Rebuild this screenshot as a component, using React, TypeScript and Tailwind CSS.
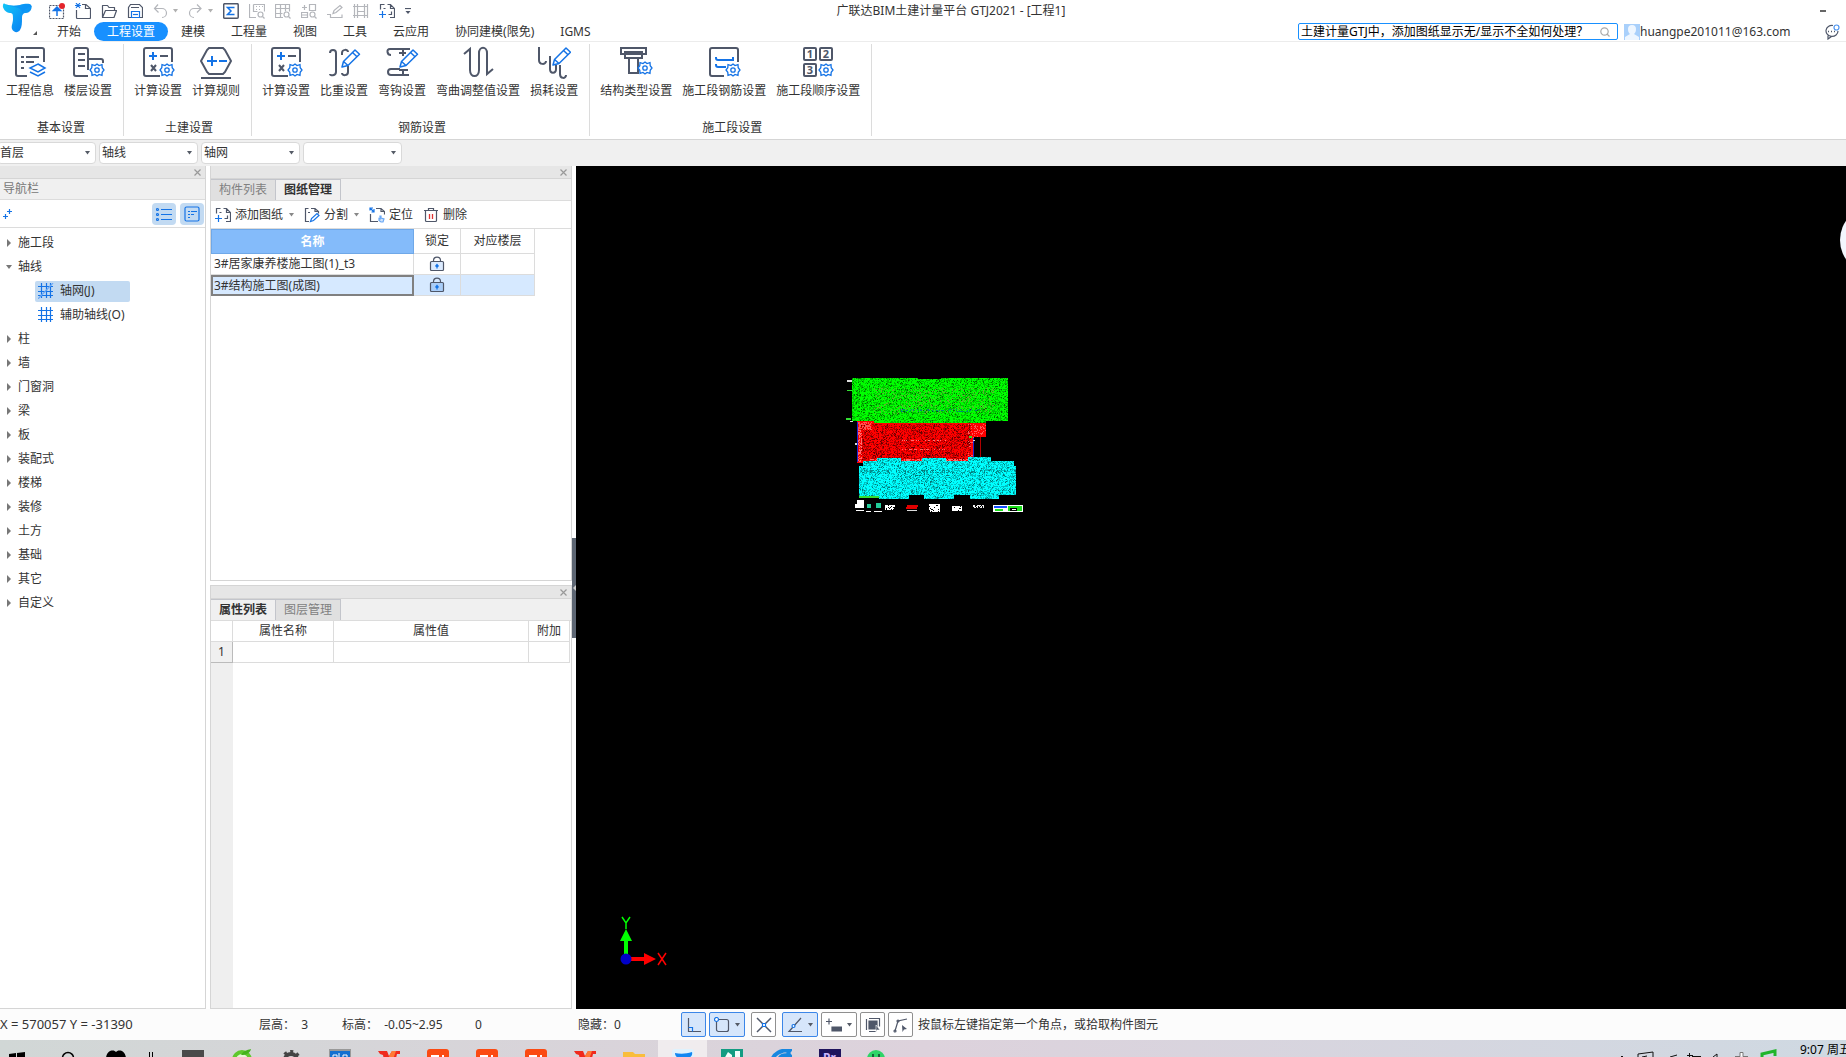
import type { ReactNode } from "react";
import clsx from "clsx";

const DARK = "#4f5769";
const BLUE = "#1473e6";
const PALE = "#b4b6bb";

type IconProps = {
  children: ReactNode;
  box?: number;
  className?: string;
  stroke?: string;
  width?: number;
};

function Icon({
  children,
  box = 16,
  className = "size-4",
  stroke = DARK,
  width = 1.2,
}: IconProps) {
  return (
    <svg
      viewBox={`0 0 ${box} ${box}`}
      className={clsx("block shrink-0", className)}
      fill="none"
      stroke={stroke}
      strokeWidth={width}
      aria-hidden="true"
    >
      {children}
    </svg>
  );
}

function Caret({ className = "text-[#555b66]" }: { className?: string }) {
  return (
    <svg viewBox="0 0 5 4" className={clsx("block h-1 w-[5px] shrink-0", className)} aria-hidden="true">
      <path d="M0 0h5L2.500 3.500z" fill="currentColor" />
    </svg>
  );
}

/* ---------- shared icon parts ---------- */

function Gear({ x, y }: { x: number; y: number }) {
  return (
    <g transform={`translate(${x} ${y})`} stroke={BLUE} strokeWidth="1.3" fill="#fff">
      <path d="M0-6l2 1.600 3-.9.2 3L7 0 5.200 2.300l-.2 3-3-.9L0 6l-2-1.600-3 .9-.2-3L-7 0l1.800-2.300.2-3 3 .9z" />
      <circle r="2.200" />
    </g>
  );
}

function Pencil({ x, y }: { x: number; y: number }) {
  return (
    <g transform={`translate(${x} ${y})`} stroke={BLUE} strokeWidth="1.5" fill="#fff" strokeLinejoin="round">
      <path d="M0 17l1.500-5.500L13 0l4.500 4.200L6 15.500z" />
      <path d="M10.500 2.500l4.500 4.300M1.500 11.500L6 15.500" />
    </g>
  );
}

const calcIcon = (
  <>
    <path d="M18 30H4a2 2 0 0 1-2-2V4a2 2 0 0 1 2-2h24a2 2 0 0 1 2 2v12" />
    <path d="M7 10h8M11 6v8" stroke={BLUE} />
    <path d="M18 10h8M9 19l5 6M14 19l-5 6" />
    <Gear x={25} y={24} />
  </>
);

const sheetAdd = (
  <>
    <path d="M1.500 6.500v-5h4M8.500 1.500h3l4 4v9h-4.500M11.500 1.500v4h4M6.500 5.500h-2M12.500 8.500v3h-3" />
    <path d="M0 11.500h7M3.500 8v7" stroke={BLUE} />
  </>
);

/* ---------- header ---------- */

const quickTools: { name: string; icon: ReactNode; pale?: boolean; caret?: boolean }[] = [
  {
    name: "升级",
    icon: (
      <>
        <rect x=".5" y="2.500" width="14" height="13" strokeDasharray="2 1" />
        <path d="M8 13V7.500H4.500L8 4l3.500 3.500H8z" fill={BLUE} stroke={BLUE} strokeWidth="1.500" />
        <circle cx="13" cy="3" r="3" fill="#e3242b" stroke="none" />
      </>
    ),
  },
  {
    name: "新建",
    icon: (
      <>
        <path d="M7 1.500h4l4.500 4v9a1 1 0 0 1-1 1h-12a1 1 0 0 1-1-1V7M10.500 1.500v4h5" />
        <path d="M1 0l4 5M5 0L1 5M0 2.500h6" stroke={BLUE} />
      </>
    ),
  },
  {
    name: "打开",
    icon: <path d="M1.500 14.500v-12h5l1.500 2h5.500v3M1.500 14.500l3-7h11l-2.500 7z" strokeLinejoin="round" />,
  },
  {
    name: "保存",
    icon: (
      <>
        <path d="M1.500 14.500v-10l2-3h9l3 3v10zM4 4.500h8" />
        <path d="M4.500 14.500v-6h8v6z" stroke={BLUE} fill="#fff" />
        <path d="M6 11.500h5" stroke={BLUE} />
      </>
    ),
  },
  { name: "撤销", pale: true, caret: true, icon: <path d="M5 1.500L1.500 5.500l4 4M2 5.500h7a4 4 0 0 1 0 9" /> },
  { name: "恢复", pale: true, caret: true, icon: <path d="M9 1.500l4 4-4 4M13 5.500H6a4 4 0 0 0 0 9" /> },
  {
    name: "汇总计算",
    icon: (
      <>
        <rect x=".7" y=".7" width="14.500" height="14.500" rx="1" strokeWidth="1.500" />
        <path d="M11.500 4.500h-7L8 8l-3.500 3.500h7" stroke={BLUE} strokeWidth="1.500" />
      </>
    ),
  },
  {
    name: "查看工程量",
    pale: true,
    icon: (
      <>
        <path d="M.5 1v13.500H7M4.500 1.500h11v7M4.500 1.500v7h4M7 3.500h1M10 3.500h1M13 3.500h1M7 6.500h1M10 6.500h1" />
        <circle cx="11.500" cy="11.500" r="2.500" />
        <path d="M13.500 13.500l2 2" />
      </>
    ),
  },
  {
    name: "查看表格",
    pale: true,
    icon: (
      <>
        <path d="M8 14.500H.5v-13h14v7M.5 5.500h14M.5 10.500h7M5.500 1.500v13M10.500 1.500v7" />
        <circle cx="11.500" cy="11.500" r="2.500" />
        <path d="M13.500 13.500l2 2" />
      </>
    ),
  },
  {
    name: "查看计算式",
    pale: true,
    icon: (
      <>
        <path d="M1 4.500h5M3.500 2v5M8.500 1.500h6v6h-6zM.5 9.500h6v5h-6zM.5 12h6" />
        <circle cx="11.500" cy="11.500" r="2.500" />
        <path d="M13.500 13.500l2 2" />
      </>
    ),
  },
  { name: "编辑钢筋", pale: true, icon: <path d="M0 11.500h3.500v3H15v-3M6 10.500l1-3 6-5 2 2-6 5z" /> },
  { name: "钢筋三维", pale: true, icon: <path d="M1.500 1v14M4.500 1v14M11.500 1v14M14.500 1v14M0 3.500h15M4.500 8.500h7M0 12.500h15" /> },
  { name: "添加图纸", icon: sheetAdd },
];

const menuTabs = ["开始", "工程设置", "建模", "工程量", "视图", "工具", "云应用", "协同建模(限免)", "IGMS"];

function Header() {
  return (
    <header className="flex h-[42px] shrink-0 border-b border-[#ececec] bg-white">
      <button aria-label="主菜单" className="flex w-11 shrink-0">
        <svg viewBox="0 0 44 40" className="h-10 w-11" aria-hidden="true">
          <defs>
            <linearGradient id="logo" x1="0" y1="0" x2="1" y2="1">
              <stop offset="0" stopColor="#12c8f8" />
              <stop offset=".5" stopColor="#0d9bf5" />
              <stop offset="1" stopColor="#0a78f0" />
            </linearGradient>
          </defs>
          <path
            d="M5 4c5 2 10 2 15 1 4-1 9-2 11 0 2 3-1 8-5 8-3 0-4 2-4 5 0 5 0 9-2 12-2 3-6 3-8-1-1-3 1-6 1-10 0-4 0-6-3-6-4 0-8-5-7-8 0-1 1-2 2-1z"
            fill="url(#logo)"
          />
          <path d="M5 4c6 4 15 1 18 9 2-5 6-6 9-6-1-4-8-3-12-2-5 1-10 1-15-1z" fill="#0a8cf5" opacity=".6" />
          <path d="M37 31v4h-4z" fill="#555" />
        </svg>
      </button>
      <div className="flex min-w-0 flex-1 flex-col">
        <div className="flex h-[21px] items-center">
          <div className="flex shrink-0 items-center gap-[10px] pl-[5px]">
            {quickTools.map((t) => (
              <button key={t.name} aria-label={t.name} className="flex items-center gap-1">
                <Icon stroke={t.pale ? PALE : DARK}>{t.icon}</Icon>
                {t.caret && <Caret className="text-[#b0b0b0]" />}
              </button>
            ))}
            <button aria-label="自定义快速访问">
              <Icon box={6} className="size-[6px]">
                <path d="M0 .5h6" />
                <path d="M.5 3h5L3 6z" fill={DARK} stroke="none" />
              </Icon>
            </button>
          </div>
          <h1 className="flex-1 truncate text-center leading-5">广联达BIM土建计量平台 GTJ2021 - [工程1]</h1>
          <div className="flex w-[355px] justify-end pr-5">
            <button aria-label="最小化" className="h-[2px] w-[6px] bg-[#666]" />
          </div>
        </div>
        <div className="flex h-5 items-end">
          <nav className="flex shrink-0 items-end">
            {menuTabs.map((t) => (
              <button
                key={t}
                className={clsx(
                  "h-[19px] rounded-full px-[13px] leading-[19px]",
                  t === "工程设置" && "bg-[#1890ff] text-white"
                )}
              >
                {t}
              </button>
            ))}
          </nav>
          <div className="mb-px ml-auto flex shrink-0 items-center pr-[6px]">
            <div className="flex h-[17px] w-[320px] items-center rounded-xs border border-[#1890ff] pr-[7px]">
              <input
                aria-label="搜索"
                defaultValue="土建计量GTJ中，添加图纸显示无/显示不全如何处理？"
                className="h-[15px] min-w-0 flex-1 pl-[2px] text-black outline-none"
              />
              <Icon box={10} className="size-[10px]" stroke="#aaa">
                <circle cx="4.500" cy="4.500" r="3.700" />
                <path d="M7 7l2.500 2.500" />
              </Icon>
            </div>
            <svg viewBox="0 0 16 16" className="ml-[6px] size-4" aria-hidden="true">
              <path d="M0 0h16v16H0z" fill="#a9d0fb" />
              <path d="M8 1c3 0 4 2 4 4 0 3-1 4-2 5l5 3v3H1v-3l5-3C5 9 4 8 4 5c0-2 1-4 4-4z" fill="#eef6ff" />
            </svg>
            <a href="#account" className="w-[156px] whitespace-nowrap">
              huangpe201011@163.com
            </a>
            <button aria-label="消息" className="ml-[28px]">
              <Icon>
                <path d="M9 1.500a6 5.500 0 1 0 5 5.500M4 11.500V15l3.500-2.500" />
                <path d="M4 7.500h1M7 7.500h1M10 7.500h1" strokeWidth="1.500" />
                <circle cx="12.500" cy="3.500" r="2.500" stroke="#4e95f0" />
              </Icon>
            </button>
          </div>
        </div>
      </div>
    </header>
  );
}

/* ---------- ribbon ---------- */

type Tool = { name: string; icon: ReactNode };

const ribbon: { title: string; tools: Tool[] }[] = [
  {
    title: "基本设置",
    tools: [
      {
        name: "工程信息",
        icon: (
          <>
            <path d="M13 30H4a2 2 0 0 1-2-2V4a2 2 0 0 1 2-2h24a2 2 0 0 1 2 2v12M7 11h3M12 11h13M7 16h3M12 16h8M7 22h3" />
            <path d="M24 18l7 4-7 4-8-4zM16 26l8 4 7-4" stroke={BLUE} strokeWidth="1.500" />
          </>
        ),
      },
      {
        name: "楼层设置",
        icon: (
          <>
            <path d="M16 30H4a2 2 0 0 1-2-2V4a2 2 0 0 1 2-2h10a2 2 0 0 1 2 2v20M6 8h7M6 14h7M6 20h7M16 13h13a2 2 0 0 1 2 2v2" />
            <Gear x={25} y={24} />
          </>
        ),
      },
    ],
  },
  {
    title: "土建设置",
    tools: [
      { name: "计算设置", icon: calcIcon },
      {
        name: "计算规则",
        icon: (
          <>
            <path d="M9 2h14l2 2 6 11-6 11-2 2H9l-2-2L1 15 7 4zM1 32h30" />
            <path d="M7 15h10M12 10v10M19 15h8" stroke={BLUE} />
          </>
        ),
      },
    ],
  },
  {
    title: "钢筋设置",
    tools: [
      { name: "计算设置", icon: calcIcon },
      {
        name: "比重设置",
        icon: (
          <>
            <path d="M2 7c0-4 6-4 6 0v19c0 4-6 4-6 2M14 9V7c0-4 6-4 6-1M20 20v6c0 4-6 4-6 1" />
            <Pencil x={14} y={4} />
          </>
        ),
      },
      {
        name: "弯钩设置",
        icon: (
          <>
            <path d="M24 3H4c-4 0-3 6 1 6M17 3v7M13 7h7M14 23H5c-4 0-4 6 0 6h18M17 23v6M13 24h9" />
            <Pencil x={14} y={4} />
          </>
        ),
      },
      {
        name: "弯曲调整值设置",
        icon: <path d="M2 8l6-5v21c0 8 9 8 9 0V7c0-7 8-7 8 0v21l6-5" />,
      },
      {
        name: "损耗设置",
        icon: (
          <>
            <path d="M1 1v13c0 5 7 5 7 1M12 10v13c0 5 6 5 6 0v-4M22 19v9c0 5 6 5 6 1" />
            <Pencil x={15} y={2} />
          </>
        ),
      },
    ],
  },
  {
    title: "施工段设置",
    tools: [
      {
        name: "结构类型设置",
        icon: (
          <>
            <path d="M1 2h25v6H1zM5 6h17v6H5zM9 12h9v15H9z" />
            <Gear x={25} y={22} />
          </>
        ),
      },
      {
        name: "施工段钢筋设置",
        icon: (
          <>
            <path d="M16 30H4a2 2 0 0 1-2-2V4a2 2 0 0 1 2-2h24a2 2 0 0 1 2 2v12" />
            <path d="M8 11v1c0 2 1 2 2 2h15v-3M8 18v1c0 2 1 2 2 2h8" stroke={BLUE} />
            <Gear x={25} y={24} />
          </>
        ),
      },
      {
        name: "施工段顺序设置",
        icon: (
          <>
            <rect x="2" y="2" width="12" height="12" rx="1" />
            <rect x="18" y="2" width="12" height="12" rx="1" />
            <rect x="2" y="18" width="12" height="12" rx="1" />
            <g fill={DARK} stroke="none" fontSize="11" fontWeight="700" textAnchor="middle">
              <text x="8" y="12">1</text>
              <text x="24" y="12">2</text>
              <text x="8" y="28">3</text>
            </g>
            <Gear x={24} y={24} />
          </>
        ),
      },
    ],
  },
];

function Ribbon() {
  return (
    <div className="flex h-[98px] shrink-0 border-b border-[#d5d5d5] bg-white pt-[2px] pb-[3px]">
      {ribbon.map((g) => (
        <section key={g.title} className="flex flex-col border-r border-[#dcdcdc] pr-[6px] pl-[5px] first:pl-px">
          <div className="flex">
            {g.tools.map((t) => (
              <button key={t.name} className="flex flex-col items-center px-[5px] pt-[2px]">
                <Icon box={33} className="size-[33px]" width={2}>
                  {t.icon}
                </Icon>
                <span className="mt-1 leading-4 whitespace-nowrap">{t.name}</span>
              </button>
            ))}
          </div>
          <h2 className="mt-auto pl-1 text-center leading-4">{g.title}</h2>
        </section>
      ))}
    </div>
  );
}

function FilterBar() {
  const filters = [
    { label: "楼层", value: "首层" },
    { label: "构件类型", value: "轴线" },
    { label: "构件", value: "轴网" },
    { label: "名称", value: "" },
  ];
  return (
    <div className="-ml-[3px] flex h-[26px] shrink-0 items-center gap-[3px]">
      {filters.map((f) => (
        <div key={f.label} className="relative w-[99px]">
          <select
            aria-label={f.label}
            className="block h-[22px] w-full appearance-none rounded-sm border border-[#d9d9d9] bg-white pl-[2px]"
          >
            <option>{f.value}</option>
          </select>
          <span className="pointer-events-none absolute top-[9px] right-[6px]">
            <Caret />
          </span>
        </div>
      ))}
    </div>
  );
}

/* ---------- panels ---------- */

function PanelStrip() {
  return (
    <div className="flex h-[13px] shrink-0 items-center justify-end border-b border-[#d5d5d5] bg-[#e6e6e6] pr-1">
      <button aria-label="关闭">
        <Icon box={7} className="size-[7px]" stroke="#999">
          <path d="M.5.5l6 6M6.500.5l-6 6" />
        </Icon>
      </button>
    </div>
  );
}

function PanelTabs({ tabs, active }: { tabs: string[]; active: string }) {
  return (
    <div className="flex h-[22px] shrink-0 border-b border-[#dcdcdc] bg-[#f0f0f0]" role="tablist">
      {tabs.map((t) => (
        <button
          key={t}
          role="tab"
          aria-selected={t === active}
          className={clsx(
            "w-[65px] border-t border-r border-[#c3c5cb]",
            t === active ? "bg-[#f0f0f0] font-bold" : "bg-[#e0e0e0] text-[#808080]"
          )}
        >
          {t}
        </button>
      ))}
    </div>
  );
}

const gridLines = <path d="M0 3.500h15M0 8.500h15M0 12.500h15M3.500 0v15M8.500 0v15M12.500 0v15" />;

const tree: { name: string; children?: Tool[] }[] = [
  { name: "施工段" },
  {
    name: "轴线",
    children: [
      {
        name: "轴网(J)",
        icon: (
          <>
            {gridLines}
            <path d="M0 16L15 0" stroke="#6aa8f5" />
          </>
        ),
      },
      { name: "辅助轴线(O)", icon: gridLines },
    ],
  },
  { name: "柱" },
  { name: "墙" },
  { name: "门窗洞" },
  { name: "梁" },
  { name: "板" },
  { name: "装配式" },
  { name: "楼梯" },
  { name: "装修" },
  { name: "土方" },
  { name: "基础" },
  { name: "其它" },
  { name: "自定义" },
];

function NavPanel() {
  return (
    <aside className="flex w-[206px] shrink-0 flex-col border-r border-b border-[#d5d5d5] bg-white">
      <PanelStrip />
      <h2 className="h-[21px] shrink-0 border-b border-[#dcdcdc] bg-[#f0f0f0] pl-[3px] leading-5 text-[#777]">
        导航栏
      </h2>
      <div className="flex h-7 shrink-0 items-center gap-1 border-b border-[#dcdcdc] pr-px pl-[3px]">
        <button aria-label="添加" className="mr-auto">
          <Icon box={10} className="size-[10px]" stroke={BLUE}>
            <path d="M0 7.500h5M2.500 5v5M4 2.500h5M6.500 0v5" />
          </Icon>
        </button>
        <button aria-label="列表" className="flex h-[22px] w-6 items-center justify-center rounded-sm bg-[#c2daf2]">
          <Icon stroke={BLUE}>
            <path d="M5 3.500h11M5 8.500h11M5 13.500h11" />
            <circle cx="1.500" cy="3.500" r="1" />
            <circle cx="1.500" cy="8.500" r="1" />
            <circle cx="1.500" cy="13.500" r="1" />
          </Icon>
        </button>
        <button aria-label="详情" className="flex h-[22px] w-6 items-center justify-center rounded-sm bg-[#c2daf2]">
          <Icon stroke={BLUE}>
            <rect x="1" y="1" width="14" height="14" rx="1.500" />
            <path d="M4 5.500h2M7 5.500h6M4 8.500h2M7 8.500h3M4 11.500h2" />
          </Icon>
        </button>
      </div>
      <ul className="pt-[3px]">
        {tree.map((n) => (
          <li key={n.name}>
            <button className="flex h-6 items-center pl-[6px] leading-6">
              <svg viewBox="0 0 6 8" className="mr-[6px] h-2 w-[6px]" aria-hidden="true">
                <path d={n.children ? "M0 2h6L3 6z" : "M1 0l4 4-4 4z"} fill="#777" />
              </svg>
              {n.name}
            </button>
            {n.children && (
              <ul className="pl-[35px]">
                {n.children.map((c, i) => (
                  <li key={c.name} className="flex h-6 items-center">
                    <button
                      className={clsx(
                        "flex h-[21px] w-[95px] items-center gap-[6px] rounded-xs pl-[3px] whitespace-nowrap",
                        i === 0 && "bg-[#c2daf2]"
                      )}
                    >
                      <Icon stroke={BLUE}>{c.icon}</Icon>
                      {c.name}
                    </button>
                  </li>
                ))}
              </ul>
            )}
          </li>
        ))}
      </ul>
    </aside>
  );
}

function Lock({ fill }: { fill: string }) {
  return (
    <Icon className="mx-auto size-4">
      <path d="M4.500 6V4.500C4.500 0 11.500 0 11.500 4.500V6" />
      <rect x="1.500" y="5.500" width="13" height="9" rx="1" fill={fill} />
      <path d="M8 12.500V9M6.500 10.500L8 8.500l1.500 2" stroke={BLUE} strokeWidth="1.300" />
    </Icon>
  );
}

function DrawingPanel() {
  const th = "border-r border-b border-[#dcdcdc] font-normal";
  return (
    <section className="flex h-[415px] shrink-0 flex-col border border-t-0 border-[#d5d5d5] bg-white">
      <PanelStrip />
      <PanelTabs tabs={["构件列表", "图纸管理"]} active="图纸管理" />
      <div className="flex h-7 shrink-0 items-center border-b border-[#dcdcdc] pt-px pl-1">
        <button className="flex items-center gap-1">
          <Icon>{sheetAdd}</Icon>
          添加图纸
          <Caret className="ml-[2px] text-[#888]" />
        </button>
        <button className="ml-[10px] flex items-center gap-1">
          <Icon>
            <path d="M5 14.500H1.500v-13h3M7 1.500h4l3.500 3v2M11 1.500v3h3.500M4 5.500h2" />
            <path d="M6.500 14.500l1-3 5.500-5 2 2-5.500 5z" stroke={BLUE} />
          </Icon>
          分割
          <Caret className="ml-[2px] text-[#888]" />
        </button>
        <button className="ml-[10px] flex items-center gap-1">
          <Icon>
            <path d="M7 1.500h5l3.500 3v3M12 1.500v3h3.500M1.500 7v7.500H9" />
            <path d="M1 1l4 4M1 3.500V1h3M5 2v3H2.500" stroke={BLUE} />
            <path d="M11 9v3l-1-.5v2l2 1.500h2l1-3-3-1V9z" stroke="#6aa8f5" fill="#cfe3fb" />
          </Icon>
          定位
        </button>
        <button className="ml-[10px] flex items-center gap-1">
          <Icon>
            <path d="M1 3.500h14M5.500 3.500v-2h5v2M2.500 4v9.500a1 1 0 0 0 1 1h9a1 1 0 0 0 1-1V4" />
            <path d="M6.500 7v5M9.500 7v5" stroke="#e03535" strokeWidth="1.300" />
          </Icon>
          删除
        </button>
      </div>
      <table className="w-[324px] table-fixed border-separate border-spacing-0">
        <colgroup>
          <col className="w-[203px]" />
          <col className="w-[47px]" />
          <col />
        </colgroup>
        <thead>
          <tr className="h-[25px]">
            <th className="border border-[#6fa8e8] bg-[#84bbfa] font-bold text-white">名称</th>
            <th className={th}>锁定</th>
            <th className={th}>对应楼层</th>
          </tr>
        </thead>
        <tbody>
          <tr className="h-[21px]">
            <td className="border-r border-b border-[#dcdcdc] pl-[3px]">3#居家康养楼施工图(1)_t3</td>
            <td className="border-r border-b border-[#dcdcdc]">
              <Lock fill="#dcebff" />
            </td>
            <td className="border-r border-b border-[#dcdcdc]" />
          </tr>
          <tr className="h-[21px] bg-[#d6e9ff]">
            <td className="border-2 border-[#808080] pl-px">3#结构施工图(成图)</td>
            <td className="border-r border-b border-[#dcdcdc]">
              <Lock fill="#a9cdf8" />
            </td>
            <td className="border-r border-b border-[#dcdcdc]" />
          </tr>
        </tbody>
      </table>
    </section>
  );
}

function PropertyPanel() {
  const cell = "border-r border-b border-[#dcdcdc] font-normal";
  return (
    <section className="flex flex-1 flex-col border border-[#d5d5d5] bg-white">
      <PanelStrip />
      <PanelTabs tabs={["属性列表", "图层管理"]} active="属性列表" />
      <table className="mr-px table-fixed border-separate border-spacing-0">
        <colgroup>
          <col className="w-[22px]" />
          <col className="w-[101px]" />
          <col />
          <col className="w-[41px]" />
        </colgroup>
        <thead>
          <tr className="h-[21px]">
            <th className={cell} aria-label="序号" />
            <th className={cell}>属性名称</th>
            <th className={cell}>属性值</th>
            <th className={cell}>附加</th>
          </tr>
        </thead>
        <tbody>
          <tr className="h-[21px]">
            <td className="border-r border-b border-[#bbb] bg-[#f0f0f0] text-center">1</td>
            <td className={cell} />
            <td className={cell} />
            <td className={cell} />
          </tr>
        </tbody>
      </table>
      <div className="w-[22px] flex-1 bg-[#efefef]" />
    </section>
  );
}

/* ---------- model view ---------- */

// scattered single-pixel marks that give the plans their dense line-work look
function speckle(x: number, y: number, w: number, h: number, density: number, seed: number) {
  let s = seed;
  let d = "";
  for (let j = 0; j < h; j++) {
    for (let i = 0; i < w; i++) {
      s = (s * 48271) % 2147483647;
      if (s / 2147483647 < density) d += `M${x + i} ${y + j}h1v1h-1z`;
    }
  }
  return d;
}

const GREEN_SHAPE = "M22 18h66v1h23v-1h67v43h-22v2H44v-2H22z";
const RED_SHAPE = "M27 61h17v2h112v14h-12v24H33v2h-6z";
const CYAN_SHAPE =
  "M29 106h4v-5h14v-3h24v3h21v-3h24v3h22v-4h23v4h23v5h2v29h-17v4h-29v-4h-16v4H94v-4H79v4H49v-2H29z";

function Plans() {
  return (
    <svg
      viewBox="0 0 210 160"
      shapeRendering="crispEdges"
      className="absolute top-[194px] left-[254px] h-[160px] w-[210px]"
      aria-label="工程图纸"
    >
      <clipPath id="green"><path d={GREEN_SHAPE} /></clipPath>
      <clipPath id="red"><path d={RED_SHAPE} /></clipPath>
      <clipPath id="cyan"><path d={CYAN_SHAPE} /></clipPath>
      <path d={RED_SHAPE} fill="#f00" />
      <g clipPath="url(#red)">
        <path d={speckle(31, 64, 110, 36, 0.38, 7001)} fill="#b00000" />
        <path d={speckle(31, 64, 110, 36, 0.1, 9101)} fill="#600" />
        <path d={speckle(28, 62, 14, 8, 0.5, 5003)} fill="#ff5050" />
        <path d={speckle(28, 70, 4, 32, 0.5, 1507)} fill="#ff6a6a" />
        <path d={speckle(72, 80, 44, 1, 0.5, 1901)} fill="#ff7070" />
        <path d={speckle(72, 89, 44, 1, 0.5, 2903)} fill="#ff6060" />
        <path d={speckle(138, 64, 18, 34, 0.2, 3301)} fill="#ff5a5a" />
        <path d={speckle(40, 99, 100, 3, 0.5, 4307)} fill="#ff6a6a" />
      </g>
      <path d="M27 62h1v40h-1zM143 78h1v20h-1z" fill="#2020d0" />
      <path d="M150 77h1v21h-1z" fill="#b00000" />
      <path d={GREEN_SHAPE} fill="#0f0" />
      <g clipPath="url(#green)">
        <path d={speckle(22, 18, 156, 45, 0.38, 1103)} fill="#00c000" />
        <path d={speckle(22, 18, 156, 45, 0.08, 2309)} fill="#007000" />
        <path d={speckle(44, 28, 120, 26, 0.1, 3701)} fill="#60b030" />
        <path d={speckle(70, 49, 80, 3, 0.2, 6301)} fill="#008878" />
      </g>
      <path d={CYAN_SHAPE} fill="#0ff" />
      <g clipPath="url(#cyan)">
        <path d={speckle(29, 97, 158, 42, 0.38, 3001)} fill="#00c0c0" />
        <path d={speckle(29, 97, 158, 42, 0.08, 7703)} fill="#007878" />
        <path d={speckle(36, 110, 140, 3, 0.25, 1709)} fill="#008f8f" />
      </g>
      <path d="M17 20h5v2h-5zM20 61h3v1h-3zM25 83h2v2h-2zM143 80h2v1h-2z" fill="#ddd" />
      <path d="M17 30h5v1h-5zM16 58h5v2h-5zM29 136h20v2H29zM139 76h3v2h-3z" fill="#3d3" />
      <path d="M27 140h7v8h-9v-4h2zM26 150h8v1h-8zM36 151h5v1h-5zM44 151h8v1h-8z" fill="#fff" />
      <path d="M37 144h4v4h-4zM46 143h5v5h-5z" fill="#2c9" />
      <path d={speckle(55, 145, 10, 5, 0.85, 8009)} fill="#fff" />
      <path d="M77 145h11l-1 4H76z" fill="#e00000" />
      <path d="M77 150h10v1H77z" fill="#ddd" />
      <path d={speckle(99, 144, 11, 8, 0.85, 1801)} fill="#fff" />
      <path d={speckle(122, 146, 10, 5, 0.85, 2803)} fill="#fff" />
      <path d={speckle(143, 145, 11, 3, 0.7, 3803)} fill="#eee" />
      <path d="M163 145h30v7h-30z" fill="#fff" />
      <path d="M164 146h13v2h-13z" fill="#1450ff" />
      <path d="M178 146h14v5h-14zM165 149h8v2h-8z" fill="#1ee01e" />
      <path d="M180 148h7v3h-7z" fill="#000" />
      <path d="M182 149h4v1h-4z" fill="#fff" />
    </svg>
  );
}

function ModelView() {
  return (
    <main className="relative min-w-0 flex-1 overflow-hidden bg-black">
      <Plans />
      <svg viewBox="0 0 90 80" className="absolute bottom-[29px] left-6 h-20 w-[90px]" aria-label="坐标轴">
        <path d="M24 40h4v18h-4zM20 41l6-12 6 12z" fill="#0f0" />
        <path d="M30 57h15v4H30zM44 53l12 6-12 6z" fill="red" />
        <circle cx="26" cy="59" r="5.500" fill="#0000c8" />
        <path d="M22 17l4 6 4-6M26 23v6" stroke="#0f0" strokeWidth="1.500" fill="none" />
        <path d="M58 53l8 12M66 53l-8 12" stroke="red" strokeWidth="1.500" fill="none" />
      </svg>
      <button aria-label="视图方向" className="absolute top-10 -right-[62px] size-[68px] rounded-full bg-[#f3f6fd]" />
    </main>
  );
}

/* ---------- status bar ---------- */

const snapTools: { name: string; on?: boolean; caret?: boolean; icon: ReactNode }[] = [
  {
    name: "正交",
    on: true,
    icon: (
      <>
        <path d="M2.500 1v13.500H15" />
        <path d="M2.500 10.500h4v4" stroke={BLUE} />
      </>
    ),
  },
  {
    name: "捕捉",
    on: true,
    caret: true,
    icon: (
      <>
        <rect x="2.500" y="2.500" width="12" height="12" rx="2" />
        <circle cx="2.500" cy="2.500" r="2" fill="#fff" stroke={BLUE} />
      </>
    ),
  },
  {
    name: "交点",
    icon: (
      <>
        <path d="M1 1l14 14M15 1L1 15" strokeWidth="1.500" />
        <path d="M6.500 6.500h3v3h-3z" fill="#fff" stroke={BLUE} />
      </>
    ),
  },
  {
    name: "极轴",
    on: true,
    caret: true,
    icon: (
      <>
        <path d="M14 1L2 14.500h13" />
        <circle cx="6.500" cy="9" r="1.500" fill="#fff" stroke={BLUE} />
      </>
    ),
  },
  {
    name: "动态输入",
    caret: true,
    icon: (
      <>
        <path d="M0 4.500h6M3 1.500v6" />
        <path d="M6 10h10v4H6z" fill={DARK} />
      </>
    ),
  },
  {
    name: "选择",
    icon: (
      <>
        <path d="M4 4h8v8H4z" fill={DARK} />
        <path d="M4 1.500h10.500v8M1.500 2v11M4 14.500h7" />
        <path d="M11 8l4 5h-3l-1 2z" fill={DARK} stroke="#fff" strokeWidth=".6" />
      </>
    ),
  },
  {
    name: "折线",
    icon: (
      <>
        <path d="M2 14L5 4l9-2" />
        <circle cx="2" cy="14" r="1" />
        <circle cx="5" cy="4" r="1" />
        <path d="M9 8l5 4-3 .5L9.500 15z" fill={DARK} stroke="none" />
      </>
    ),
  },
];

function StatusBar() {
  return (
    <footer className="flex h-[31px] shrink-0 items-center overflow-hidden bg-[#fcfcfc] whitespace-nowrap">
      <span className="w-[259px] shrink-0 text-[13px]">X = 570057 Y = -31390</span>
      <span className="w-[83px] shrink-0">层高：&nbsp; 3</span>
      <span className="w-[133px] shrink-0">标高：&nbsp; -0.05~2.95</span>
      <span className="w-[103px] shrink-0">0</span>
      <span className="w-[103px] shrink-0">隐藏：0</span>
      <div className="flex shrink-0 gap-[3px]">
        {snapTools.map((t) => (
          <button
            key={t.name}
            aria-label={t.name}
            className={clsx(
              "flex h-[25px] items-center justify-center gap-[5px] rounded-xs border",
              t.caret ? "w-9" : "w-[25px]",
              t.name === "交点" && "mx-[3px]",
              t.on ? "border-[#3b86e8] bg-[#d6e6fb]" : "border-[#8f8f8f] bg-white"
            )}
          >
            <Icon>{t.icon}</Icon>
            {t.caret && <Caret />}
          </button>
        ))}
      </div>
      <span className="ml-[5px]">按鼠标左键指定第一个角点，或拾取构件图元</span>
    </footer>
  );
}

/* ---------- taskbar, only the top of it is on screen ---------- */

const wps = (
  <>
    <path d="M0 2h9l2 5 3-5h9l-1 3h-3l-4 17H8L5 6 2 5z" fill="#f02a1d" />
    <path d="M11 7l3-5h4l-5 14z" fill="#ff7a35" />
  </>
);
const orange = (
  <>
    <rect width="22" height="22" rx="3" fill="#fb4a12" />
    <path d="M4 7h8M4 9v8M8 9v8M12 9v8M16 6v11" stroke="#fff" strokeWidth="2" />
  </>
);

const apps: { name: string; slot: string; icon: ReactNode }[] = [
  { name: "开始菜单", slot: "w-9", icon: <path d="M2 5l7-1v8H2zM10 4l8-1v9h-8z" fill="#000" /> },
  { name: "搜索", slot: "w-16", icon: <circle cx="11" cy="9" r="5.500" fill="none" stroke="#000" strokeWidth="1.500" /> },
  { name: "小娜", slot: "w-8", icon: <path d="M1 10c0-9 8-10 10-7 2-3 10-2 10 7l-3 6H4z" fill="#000" /> },
  { name: "任务视图", slot: "w-9", icon: <path d="M10.500 3v10M13.500 3v10" stroke="#000" /> },
  { name: "终端", slot: "w-[49px]", icon: <path d="M0 1h22v21H0z" fill="#4a4a4a" /> },
  {
    name: "浏览器",
    slot: "w-[49px]",
    icon: (
      <>
        <circle cx="11" cy="11" r="10" fill="#5fc82c" />
        <circle cx="11" cy="11" r="6" fill="#e3f7d5" />
        <path d="M10 6c2-4 6-5 10-6-1 4-5 6-10 6z" fill="#44b31c" />
      </>
    ),
  },
  {
    name: "设置",
    slot: "w-[49px]",
    icon: (
      <>
        <circle cx="11" cy="11" r="6" fill="none" stroke="#444" strokeWidth="4" />
        <circle cx="11" cy="11" r="8.500" fill="none" stroke="#444" strokeWidth="3" strokeDasharray="3 3.500" />
      </>
    ),
  },
  {
    name: "远程",
    slot: "w-[49px]",
    icon: (
      <>
        <path d="M0 0h22v20H0z" fill="#999" />
        <path d="M1 2h20v18H1z" fill="#146fd0" />
        <path d="M4 6h4v3H4zM10 4v5M14 6h4v3h-4z" stroke="#fff" fill="none" />
      </>
    ),
  },
  { name: "表格一", slot: "w-[49px]", icon: wps },
  { name: "文档一", slot: "w-[49px]", icon: orange },
  { name: "文档二", slot: "w-[49px]", icon: orange },
  { name: "文档三", slot: "w-[49px]", icon: orange },
  { name: "表格二", slot: "w-[49px]", icon: wps },
  { name: "文件夹", slot: "w-[49px]", icon: <path d="M0 3h10l2 2h10v15H0z" fill="#f9bd3c" /> },
  {
    name: "土建计量",
    slot: "w-[49px] bg-[#f0ecee]",
    icon: (
      <>
        <rect width="22" height="22" rx="3" fill="#dff2fd" />
        <path d="M3 4c5 1 11 1 17-1 1 4-2 6-5 6v8H8V9C5 9 3 7 3 4z" fill="#1287f2" />
      </>
    ),
  },
  {
    name: "造价",
    slot: "w-[49px]",
    icon: (
      <>
        <path d="M0 0h22v22H0z" fill="#139c82" />
        <path d="M3 10l4-7 4 3v6H3zM14 2h5v10h-5z" fill="#f0fffb" />
      </>
    ),
  },
  {
    name: "网页",
    slot: "w-[49px]",
    icon: <path d="M2 14C2 4 12 1 20 1c-2 2-2 4 0 6-7-2-10 0-11 4h12" fill="none" stroke="#1787e0" strokeWidth="4" />,
  },
  {
    name: "剪辑",
    slot: "w-[49px]",
    icon: (
      <>
        <path d="M0 0h22v22H0z" fill="#1f145d" />
        <text x="4" y="13" fontSize="12" fontWeight="700" fill="#c9b6ff">Pr</text>
      </>
    ),
  },
  {
    name: "微信",
    slot: "w-[46px]",
    icon: (
      <>
        <circle cx="10" cy="10" r="9" fill="#2fd467" />
        <path d="M7 5v3M13 5v3" stroke="#14653a" strokeWidth="2" />
      </>
    ),
  },
];

function Taskbar() {
  return (
    <div className="flex h-[17px] shrink-0 overflow-hidden bg-linear-to-r from-[#d1d7d6] via-[#ddd2dc] to-[#cfd9e2]">
      {apps.map((a) => (
        <button key={a.name} aria-label={a.name} className={clsx("flex shrink-0 justify-center pt-[9px]", a.slot)}>
          <svg viewBox="0 0 22 22" className="size-[22px] shrink-0" aria-hidden="true">
            {a.icon}
          </svg>
        </button>
      ))}
      <svg viewBox="0 0 160 17" className="mr-5 ml-auto h-[17px] w-[160px] shrink-0" fill="none" stroke="#111" aria-hidden="true">
        <path d="M1 17l1-1 1 1M18 17v-3l15-2v5M22 17l5-1M50 17l7-2M67 15.500h6M69.500 13v4M72 16.500h9M93 17l4-3v3" />
        <path d="M115 16.500h5v-4h3v4h5" stroke="#777" fill="#fff" />
        <path d="M142 17v-3l13-3v5" stroke="#20b52a" strokeWidth="3" />
      </svg>
      <time className="w-[46px] shrink-0 overflow-hidden pt-[2px] leading-4 whitespace-nowrap text-black">
        9:07 周五
      </time>
    </div>
  );
}

export default function App() {
  return (
    <div className="flex h-screen flex-col overflow-hidden bg-[#f0f0f0] font-['Noto_Sans','Noto_Sans_CJK_SC',sans-serif] text-xs text-[#333]">
      <Header />
      <Ribbon />
      <FilterBar />
      <div className="flex min-h-0 flex-1 bg-white">
        <NavPanel />
        <div className="ml-1 flex w-[362px] shrink-0 flex-col gap-1">
          <DrawingPanel />
          <PropertyPanel />
        </div>
        <div className="flex w-1 shrink-0 items-center">
          <button aria-label="收起面板" className="flex h-[100px] w-1 items-center bg-[#5d6673]">
            <svg viewBox="0 0 4 6" className="h-[6px] w-1" aria-hidden="true">
              <path d="M4 0v6L1 3z" fill="#ccc" />
            </svg>
          </button>
        </div>
        <ModelView />
      </div>
      <StatusBar />
      <Taskbar />
    </div>
  );
}
